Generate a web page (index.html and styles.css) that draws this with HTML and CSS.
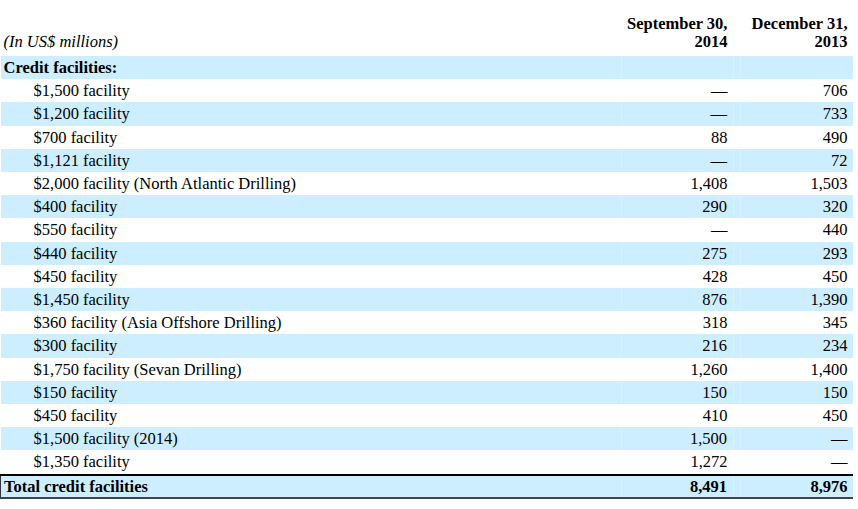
FILE: index.html
```html
<!DOCTYPE html>
<html>
<head>
<meta charset="utf-8">
<link rel="stylesheet" href="styles.css">
</head>
<body>
<table class="fin">
  <colgroup>
    <col class="c-label">
    <col class="c-num">
    <col class="c-gap">
    <col class="c-num2">
  </colgroup>
  <thead>
    <tr class="head">
      <th class="unit">(In US$ millions)</th>
      <th class="num">September 30,<br>2014</th>
      <th class="gap"></th>
      <th class="num num2">December 31,<br>2013</th>
    </tr>
  </thead>
  <tbody>
    <tr class="alt"><td class="label section">Credit facilities:</td><td class="num"></td><td class="gap"></td><td class="num num2"></td></tr>
    <tr><td class="label">$1,500 facility</td><td class="num">—</td><td class="gap"></td><td class="num num2">706</td></tr>
    <tr class="alt"><td class="label">$1,200 facility</td><td class="num">—</td><td class="gap"></td><td class="num num2">733</td></tr>
    <tr><td class="label">$700 facility</td><td class="num">88</td><td class="gap"></td><td class="num num2">490</td></tr>
    <tr class="alt"><td class="label">$1,121 facility</td><td class="num">—</td><td class="gap"></td><td class="num num2">72</td></tr>
    <tr><td class="label">$2,000 facility (North Atlantic Drilling)</td><td class="num">1,408</td><td class="gap"></td><td class="num num2">1,503</td></tr>
    <tr class="alt"><td class="label">$400 facility</td><td class="num">290</td><td class="gap"></td><td class="num num2">320</td></tr>
    <tr><td class="label">$550 facility</td><td class="num">—</td><td class="gap"></td><td class="num num2">440</td></tr>
    <tr class="alt"><td class="label">$440 facility</td><td class="num">275</td><td class="gap"></td><td class="num num2">293</td></tr>
    <tr><td class="label">$450 facility</td><td class="num">428</td><td class="gap"></td><td class="num num2">450</td></tr>
    <tr class="alt"><td class="label">$1,450 facility</td><td class="num">876</td><td class="gap"></td><td class="num num2">1,390</td></tr>
    <tr><td class="label">$360 facility (Asia Offshore Drilling)</td><td class="num">318</td><td class="gap"></td><td class="num num2">345</td></tr>
    <tr class="alt"><td class="label">$300 facility</td><td class="num">216</td><td class="gap"></td><td class="num num2">234</td></tr>
    <tr><td class="label">$1,750 facility (Sevan Drilling)</td><td class="num">1,260</td><td class="gap"></td><td class="num num2">1,400</td></tr>
    <tr class="alt"><td class="label">$150 facility</td><td class="num">150</td><td class="gap"></td><td class="num num2">150</td></tr>
    <tr><td class="label">$450 facility</td><td class="num">410</td><td class="gap"></td><td class="num num2">450</td></tr>
    <tr class="alt"><td class="label">$1,500 facility (2014)</td><td class="num">1,500</td><td class="gap"></td><td class="num num2">—</td></tr>
    <tr><td class="label">$1,350 facility</td><td class="num">1,272</td><td class="gap"></td><td class="num num2">—</td></tr>
    <tr class="alt total"><td class="label section first">Total credit facilities</td><td class="num">8,491</td><td class="gap"></td><td class="num num2">8,976</td></tr>
  </tbody>
</table>
</body>
</html>
```
FILE: styles.css
```css
html, body {
  margin: 0;
  padding: 0;
  background: #ffffff;
}

.fin {
  border-collapse: collapse;
  border-spacing: 0;
  width: 852px;
  table-layout: fixed;
  font-family: "Liberation Serif", "Times New Roman", serif;
  font-size: 16.5px;
  color: #000000;
}

.c-label { width: 621px; }
.c-num { width: 112px; }
.c-gap { width: 7px; }
.c-num2 { width: 112px; }

.head th {
  height: 51px;
  vertical-align: bottom;
  line-height: 18px;
  padding: 0 0 5px 0;
}

.head .unit {
  text-align: left;
  font-style: italic;
  font-weight: normal;
  padding-left: 3px;
}

.head .num {
  text-align: right;
  font-weight: bold;
  padding-right: 6px;
  white-space: nowrap;
}

.head .num2 {
  padding-right: 5px;
}

tbody td {
  line-height: 19.2px;
  padding: 2px 0;
  white-space: nowrap;
}

.alt td {
  background: #cceeff;
}

.alt td + td {
  border-left: 1px solid #d8f3ff;
}

.label {
  padding-left: 33px !important;
}

.label.section {
  padding-left: 3px !important;
  font-weight: bold;
}

tbody .num {
  text-align: right;
  padding-right: 6px;
}

tbody .num2 {
  padding-right: 5px;
}

.total td {
  font-weight: bold;
  border-top: 2px solid #000000;
  border-bottom: 2px solid #444444;
  padding-top: 1px;
  padding-bottom: 1px;
}

.total td.first {
  border-left: 1px solid #333333;
}
```
